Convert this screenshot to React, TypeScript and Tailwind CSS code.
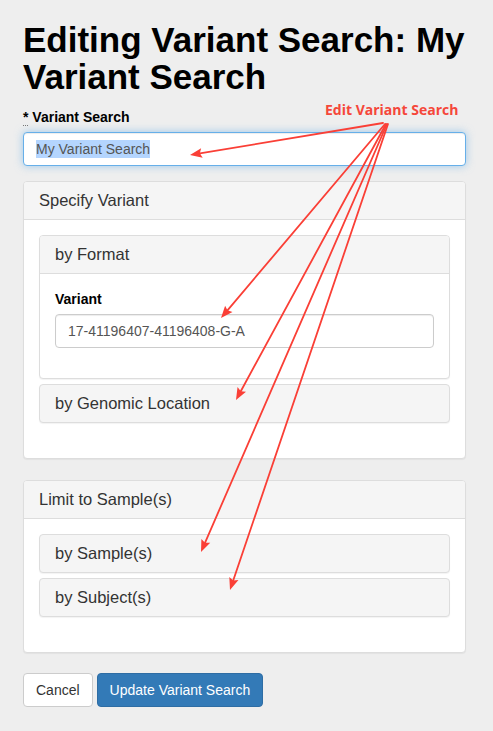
import React from 'react';

const font = { fontFamily: '"Liberation Sans", Arial, Helvetica, sans-serif' };

type Arrow = { from: [number, number]; to: [number, number] };

const arrows: Arrow[] = [
  { from: [383, 123], to: [190, 155] },
  { from: [385, 124], to: [221, 318] },
  { from: [386, 124], to: [236, 400] },
  { from: [387, 124], to: [201, 552] },
  { from: [388, 124], to: [230, 590] },
];

function ArrowLine({ from, to }: Arrow) {
  const [x1, y1] = from;
  const [x2, y2] = to;
  const ang = Math.atan2(y2 - y1, x2 - x1);
  const len = 13;
  const spread = 0.38;
  const a = [x2 - len * Math.cos(ang - spread), y2 - len * Math.sin(ang - spread)];
  const b = [x2 - len * Math.cos(ang + spread), y2 - len * Math.sin(ang + spread)];
  const mx = x2 - (len - 3) * Math.cos(ang);
  const my = y2 - (len - 3) * Math.sin(ang);
  return (
    <g>
      <line x1={x1} y1={y1} x2={mx} y2={my} stroke="#fa3f36" strokeWidth={1.8} strokeLinecap="round" />
      <polygon points={`${x2},${y2} ${a[0]},${a[1]} ${mx},${my} ${b[0]},${b[1]}`} fill="#fa3f36" />
    </g>
  );
}

function PanelHeading({ title }: { title: string }) {
  return (
    <div className="h-[38px] bg-[#f5f5f5] border-b border-[#dddddd] px-[15px] flex items-center rounded-t-[3px]">
      <span className="text-[16.5px] text-[#333333]">{title}</span>
    </div>
  );
}

function CollapsedPanel({ title }: { title: string }) {
  return (
    <div className="h-[39px] bg-[#f5f5f5] border border-[#dddddd] rounded-[4px] px-[15px] flex items-center shadow-[0_1px_1px_rgba(0,0,0,0.05)]">
      <span className="text-[16.5px] text-[#333333]">{title}</span>
    </div>
  );
}

export default function App() {
  return (
    <div className="relative w-[493px] h-[731px] bg-[#eeeeee] overflow-hidden" style={font}>
      <div className="pl-[23px] pr-[27px] pt-[21px]">
        <h1 className="text-[35px] leading-[37px] font-bold text-black">
          Editing Variant Search: My Variant Search
        </h1>

        <div className="mt-[12px] text-[14px] leading-[20px] font-bold text-black">
          <span className="border-b border-dotted border-[#777777]">*</span> Variant Search
        </div>
        <div className="mt-[5px] h-[34px] bg-white border border-[#66afe9] rounded-[4px] px-[12px] flex items-center shadow-[inset_0_1px_1px_rgba(0,0,0,0.075),0_0_8px_rgba(102,175,233,0.6)]">
          <span className="text-[14px] leading-[18px] text-[#555555] bg-[#b4d5fe]">My Variant Search</span>
        </div>

        <div className="mt-[15px] bg-white border border-[#dddddd] rounded-[4px] shadow-[0_1px_1px_rgba(0,0,0,0.05)]">
          <PanelHeading title="Specify Variant" />
          <div className="p-[15px] pb-[20px]">
            <div className="flex flex-col gap-[5px] pb-[15px]">
              <div className="bg-white border border-[#dddddd] rounded-[4px] shadow-[0_1px_1px_rgba(0,0,0,0.05)]">
                <PanelHeading title="by Format" />
                <div className="p-[15px] pb-[30px]">
                  <div className="text-[14px] leading-[20px] font-bold text-black">Variant</div>
                  <div className="mt-[5px] h-[34px] bg-white border border-[#cccccc] rounded-[4px] px-[12px] flex items-center shadow-[inset_0_1px_1px_rgba(0,0,0,0.075)]">
                    <span className="text-[14px] text-[#555555]">17-41196407-41196408-G-A</span>
                  </div>
                </div>
              </div>
              <CollapsedPanel title="by Genomic Location" />
            </div>
          </div>
        </div>

        <div className="mt-[21px] bg-white border border-[#dddddd] rounded-[4px] shadow-[0_1px_1px_rgba(0,0,0,0.05)]">
          <PanelHeading title="Limit to Sample(s)" />
          <div className="p-[15px] pb-[20px]">
            <div className="flex flex-col gap-[5px] pb-[15px]">
              <CollapsedPanel title="by Sample(s)" />
              <CollapsedPanel title="by Subject(s)" />
            </div>
          </div>
        </div>

        <div className="mt-[20px] flex gap-[4px]">
          <button className="h-[34px] px-[12px] bg-white border border-[#cccccc] rounded-[4px] text-[14px] text-[#333333]">
            Cancel
          </button>
          <button className="h-[34px] px-[12px] bg-[#337ab7] border border-[#2e6da4] rounded-[4px] text-[14px] text-white">
            Update Variant Search
          </button>
        </div>
      </div>

      {/* annotation overlay */}
      <div
        className="absolute left-[325px] top-[99px] text-[14px] font-bold text-[#f5473a]"
        style={{ fontFamily: '"Open Sans", "DejaVu Sans", sans-serif' }}
      >
        Edit Variant Search
      </div>
      <svg className="absolute inset-0 pointer-events-none" width={493} height={731}>
        {arrows.map((a, i) => (
          <ArrowLine key={i} {...a} />
        ))}
      </svg>
    </div>
  );
}
